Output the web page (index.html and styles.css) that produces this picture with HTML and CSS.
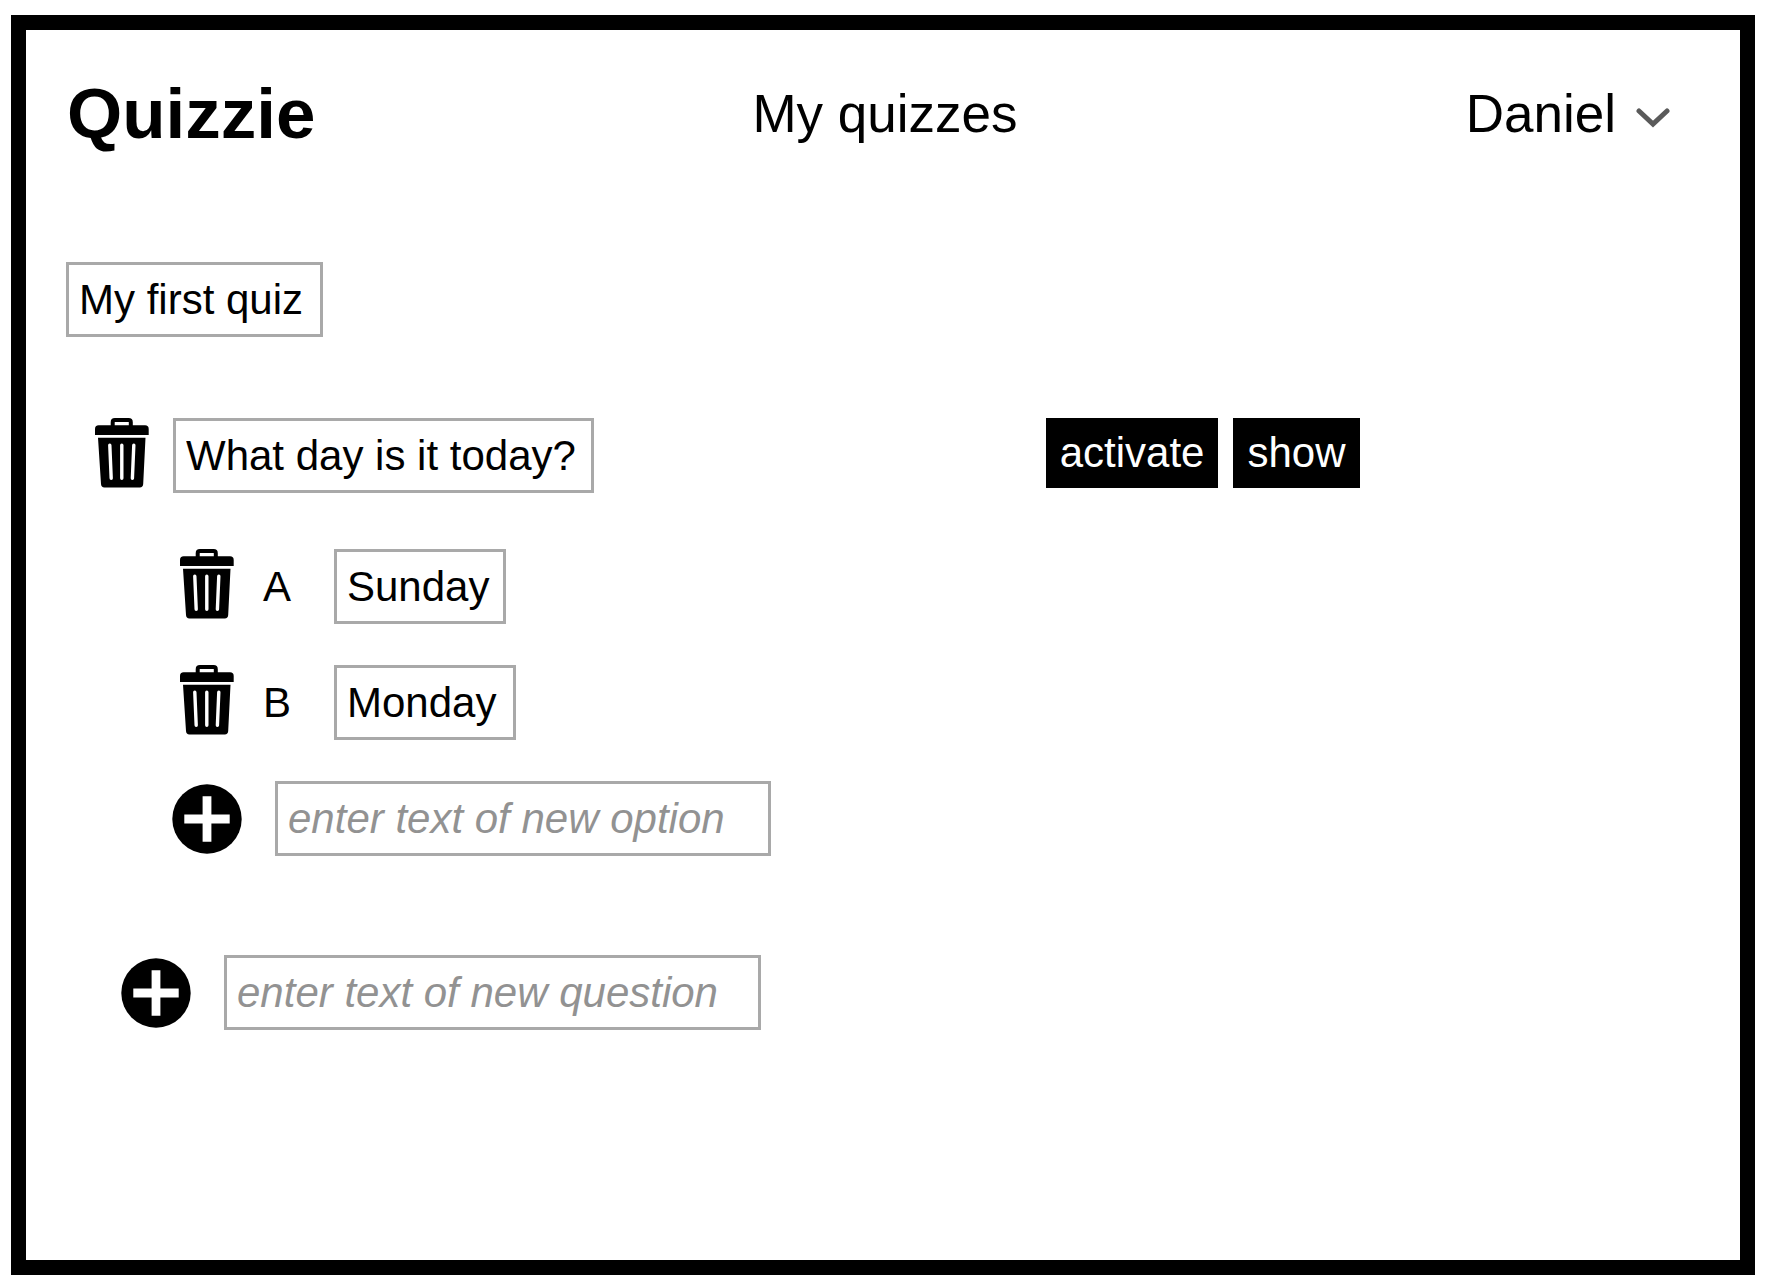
FILE: index.html
```html
<!DOCTYPE html>
<html lang="en">
<head>
<meta charset="utf-8">
<meta name="viewport" content="width=device-width, initial-scale=1">
<title>Quizzie</title>
<link rel="stylesheet" href="styles.css">
</head>
<body>
<svg class="sprite" aria-hidden="true">
  <symbol id="trash" viewBox="0 0 54 70">
    <path d="M17.7 9V4.2Q17.7 2 19.9 2H33.6Q35.8 2 35.8 4.2V9" fill="none" stroke="#000" stroke-width="4"/>
    <path d="M0 17V11Q0 7.3 3.7 7.3H50Q53.7 7.3 53.7 11V17Z"/>
    <path d="M3 19.8H50.5L48.2 66Q48 69.4 44.8 69.4H9.4Q6.2 69.4 6 66Z"/>
    <path d="M14.8 27.2L16.2 60.2M26.8 27.2V60.2M38.8 27.2L37.4 60.2" fill="none" stroke="#fff" stroke-width="3.4" stroke-linecap="round"/>
  </symbol>
  <symbol id="plus" viewBox="0 0 70 70">
    <circle cx="35" cy="35" r="34.7"/>
    <path d="M35 12.3V57.7M12.3 35H57.7" stroke="#fff" stroke-width="8.8"/>
  </symbol>
</svg>
<div class="frame">
  <header class="header">
    <h1 class="brand">Quizzie</h1>
    <a class="nav-link" href="#">My quizzes</a>
    <button class="user-menu" type="button" aria-haspopup="true">
      Daniel
      <svg class="chevron" viewBox="0 0 34 20" aria-hidden="true"><path d="M3 3L17 16L31 3" fill="none" stroke="#5a5a5a" stroke-width="5" stroke-linecap="round"/></svg>
    </button>
  </header>
  <main class="quiz">
    <input class="field field-title" type="text" aria-label="Quiz title" value="My first quiz">
    <section class="question">
      <div class="question-row">
        <div class="question-edit">
          <button class="icon-button" type="button" aria-label="Delete question"><svg class="trash"><use href="#trash"/></svg></button>
          <input class="field field-question" type="text" aria-label="Question" value="What day is it today?">
        </div>
        <div class="actions">
          <button class="action" type="button">activate</button>
          <button class="action" type="button">show</button>
        </div>
      </div>
      <div class="options">
        <div class="option">
          <button class="icon-button" type="button" aria-label="Delete option A"><svg class="trash"><use href="#trash"/></svg></button>
          <label class="letter" for="option-a">A</label>
          <input class="field field-sunday" id="option-a" type="text" value="Sunday">
        </div>
        <div class="option">
          <button class="icon-button" type="button" aria-label="Delete option B"><svg class="trash"><use href="#trash"/></svg></button>
          <label class="letter" for="option-b">B</label>
          <input class="field field-monday" id="option-b" type="text" value="Monday">
        </div>
        <div class="add">
          <button class="icon-button" type="button" aria-label="Add option"><svg class="plus"><use href="#plus"/></svg></button>
          <input class="field field-new-option" type="text" aria-label="New option" placeholder="enter text of new option">
        </div>
      </div>
    </section>
    <div class="add add-question">
      <button class="icon-button" type="button" aria-label="Add question"><svg class="plus"><use href="#plus"/></svg></button>
      <input class="field field-new-question" type="text" aria-label="New question" placeholder="enter text of new question">
    </div>
  </main>
</div>
</body>
</html>
```
FILE: styles.css
```css
* {
  box-sizing: border-box;
}

body {
  margin: 0;
  padding: 15px 15px 13px 11px;
  background: #fff;
  color: #000;
  font-family: "Liberation Sans", Arial, Helvetica, sans-serif;
  font-size: 42px;
}

button,
input {
  margin: 0;
  font: inherit;
  color: inherit;
}

button {
  padding: 0;
  border: 0;
  background: none;
  cursor: pointer;
}

.sprite {
  display: none;
}

.frame {
  min-height: calc(100vh - 28px);
  border: 15px solid #000;
}

.header {
  display: grid;
  grid-template-columns: 1fr auto 1fr;
  align-items: center;
  padding: 44px 37px 0 41px;
  font-size: 53px;
  line-height: 80px;
}

.brand {
  margin: 0;
  font-size: 71px;
  font-weight: bold;
}

.nav-link {
  color: inherit;
  text-decoration: none;
}

.user-menu {
  display: flex;
  align-items: center;
  justify-self: end;
  gap: 20px;
  padding-right: 33px;
  line-height: 80px;
}

.chevron {
  width: 34px;
  height: 20px;
  margin-top: 8px;
}

.quiz {
  padding: 108px 0 40px 40px;
}

.field {
  display: block;
  height: 75px;
  padding: 0 10px;
  border: 3px solid #a9a9a9;
  border-radius: 0;
  background: #fff;
}

.field::placeholder {
  color: #929292;
  font-style: italic;
  opacity: 1;
}

.field-title {
  width: 257px;
}

.field-question {
  width: 421px;
}

.field-sunday {
  width: 172px;
}

.field-monday {
  width: 182px;
}

.field-new-option {
  width: 496px;
}

.field-new-question {
  width: 537px;
}

.question {
  padding: 81px 0 0 21px;
}

.question-row {
  display: grid;
  grid-template-columns: 58% auto;
  align-items: start;
}

.question-edit {
  display: flex;
  align-items: flex-start;
  gap: 16px;
}

.icon-button {
  display: flex;
  justify-content: center;
  flex: none;
  width: 70px;
  height: 70px;
}

.trash {
  width: 54px;
  height: 70px;
}

.plus {
  width: 70px;
  height: 70px;
}

.actions {
  display: flex;
  gap: 15px;
}

.action {
  height: 70px;
  padding: 0 14px;
  background: #000;
  color: #fff;
}

.options {
  display: flex;
  flex-direction: column;
  gap: 41px;
  padding: 56px 0 0 85px;
}

.option {
  display: flex;
  align-items: flex-start;
}

.letter {
  width: 92px;
  padding-left: 21px;
  line-height: 75px;
}

.add {
  display: flex;
  align-items: center;
  gap: 33px;
}

.add-question {
  padding: 99px 0 0 55px;
}
```
